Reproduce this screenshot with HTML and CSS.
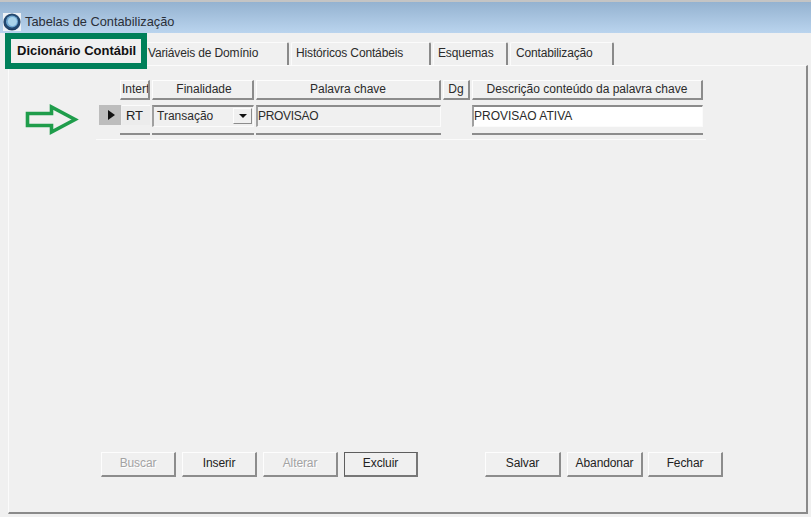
FILE: index.html
```html
<!DOCTYPE html>
<html lang="pt-BR">
<head>
<meta charset="utf-8">
<title>Tabelas de Contabilização</title>
<link rel="stylesheet" href="styles.css">
</head>
<body>
<div class="window">
  <header class="titlebar">
    <svg class="logo" width="18" height="18" viewBox="0 0 18 18" aria-hidden="true">
      <rect width="18" height="18" fill="#eef2f6"/>
      <circle cx="9" cy="9" r="8.6" fill="#23486f"/>
      <circle cx="9" cy="8.6" r="6" fill="#6fa8d2"/>
      <circle cx="9.4" cy="8.6" r="4.6" fill="#a9d3ea"/>
      <path d="M1 10.5 A8.4 8.4 0 0 0 17 11.5 A8 5.5 0 0 1 1 10.5Z" fill="#0f2747"/>
    </svg>
    <span class="title">Tabelas de Contabilização</span>
  </header>
  <nav class="tabs">
    <div class="tab tab-active">Dicionário Contábil<span class="highlight"></span></div>
    <div class="tab tab-var">Variáveis de Domínio</div>
    <div class="tab tab-hist">Históricos Contábeis</div>
    <div class="tab tab-esq">Esquemas</div>
    <div class="tab tab-cont">Contabilização</div>
  </nav>
  <main class="panel">
    <svg class="arrow" width="58" height="34" viewBox="0 0 58 34" aria-hidden="true">
      <path d="M3.5 9.5 H27.5 V3 L51 15.5 L27.5 28 V21.5 H3.5 Z" fill="none" stroke="#1f9d4b" stroke-width="3.6"/>
    </svg>
    <section class="grid-wrap">
      <div class="grid">
        <div class="head-spacer"></div>
        <div class="head head-clip">Interf</div>
        <div class="head head-fin">Finalidade</div>
        <div class="head">Palavra chave</div>
        <div class="head">Dg</div>
        <div class="head">Descrição conteúdo da palavra chave</div>

        <div class="indicator"><span class="pointer"></span></div>
        <div class="cell-plain">RT</div>
        <div class="field combo"><span>Transação</span><span class="combo-btn"><span class="combo-caret"></span></span></div>
        <div class="field field-tight">PROVISAO</div>
        <div></div>
        <div class="field field-white">PROVISAO ATIVA</div>

        <div></div>
        <div class="stub"></div>
        <div class="stub"></div>
        <div class="stub"></div>
        <div></div>
        <div class="stub"></div>
      </div>
    </section>
    <footer class="actions">
      <button class="btn w75" disabled>Buscar</button>
      <button class="btn w75">Inserir</button>
      <button class="btn w75" disabled>Alterar</button>
      <button class="btn btn-default w74">Excluir</button>
      <button class="btn w76 group-start">Salvar</button>
      <button class="btn w76">Abandonar</button>
      <button class="btn w75 tight">Fechar</button>
    </footer>
  </main>
</div>
</body>
</html>
```
FILE: styles.css
```css
* { box-sizing: border-box; }
html, body { margin: 0; padding: 0; }
body {
  width: 811px;
  height: 517px;
  overflow: hidden;
  background: #f0f0f0;
  font-family: "Liberation Sans", Arial, sans-serif;
  font-size: 12px;
  color: #222;
}
.window {
  width: 811px;
  height: 517px;
  display: flex;
  flex-direction: column;
}
.titlebar {
  height: 33px;
  flex: none;
  display: flex;
  align-items: center;
  gap: 4px;
  padding: 8px 0 0 3px;
  border-top: 2px solid #c4c4c4;
  background: linear-gradient(#94b2d0, #bad4ee);
}
.logo { flex: none; }
.title { font-size: 12.8px; color: #2a2f38; }
.tabs {
  height: 32px;
  flex: none;
  display: flex;
  align-items: flex-end;
  padding-left: 11px;
  gap: 2px;
}
.tab {
  height: 23px;
  padding: 3px 0 0;
  border-top: 1px solid #fbfbfb;
  border-left: 1px solid #fbfbfb;
  border-right: 2px solid #8a8a8a;
  border-radius: 2px 2px 0 0;
  color: #2b2b2b;
  letter-spacing: -0.15px;
  white-space: nowrap;
}
.tab-active {
  position: relative;
  width: 133px;
  height: 27px;
  padding: 5px 0 0 6px;
  border: none;
  font-size: 13px;
  font-weight: 700;
  letter-spacing: 0;
  color: #111;
}
.highlight {
  position: absolute;
  z-index: 2;
  left: -6px;
  top: -5px;
  width: 142px;
  height: 36px;
  border: 6px solid #00805a;
  pointer-events: none;
}
.tab-var { width: 143px; padding-left: 1px; }
.tab-hist { width: 140px; padding-left: 4px; }
.tab-esq { width: 75px; padding-left: 4px; }
.tab-cont { width: 104px; padding-left: 5px; }
.panel {
  position: relative;
  flex: 1;
  display: flex;
  flex-direction: column;
  margin: 0 3px 3px 8px;
  padding-top: 14px;
  border-top: 1px solid #fbfbfb;
  border-left: 1px solid #fbfbfb;
  border-right: 2px solid #8a8a8a;
  border-bottom: 2px solid #8a8a8a;
}
.arrow {
  position: absolute;
  left: 15px;
  top: 38px;
}
.grid-wrap {
  width: 610px;
  margin-left: 87px;
  padding: 0 3px 4px;
  border-bottom: 1px solid #fbfbfb;
}
.grid {
  display: grid;
  grid-template-columns: 19px 30px 102px 185px 27px 231px;
  grid-template-rows: 20px 22px 3px;
  column-gap: 2px;
  row-gap: 5px;
}
.head {
  display: flex;
  align-items: center;
  justify-content: center;
  overflow: hidden;
  white-space: nowrap;
  padding-bottom: 1px;
  border-top: 1px solid #fdfdfd;
  border-left: 1px solid #fdfdfd;
  border-right: 2px solid #8c8c8c;
  border-bottom: 2px solid #8c8c8c;
  color: #2b2b2b;
}
.head-clip { justify-content: flex-start; padding-left: 1px; }
.head-fin { padding-left: 3px; }
.indicator {
  margin-right: -3px;
  height: 20px;
  display: flex;
  align-items: center;
  padding-left: 9px;
  background: #bdbdbd;
}
.pointer {
  width: 0;
  height: 0;
  border-left: 7px solid #111;
  border-top: 5px solid transparent;
  border-bottom: 5px solid transparent;
}
.cell-plain {
  position: relative;
  margin-left: 2px;
  height: 20px;
  display: flex;
  align-items: center;
  justify-content: center;
  padding-right: 3px;
  font-size: 13px;
  background: #ececec;
  border-top: 1px solid #fbfbfb;
}
.field {
  display: flex;
  align-items: center;
  padding: 0 0 2px;
  white-space: nowrap;
  border-top: 2px solid #8c8c8c;
  border-left: 2px solid #a0a0a0;
  border-right: 1px solid #fbfbfb;
  border-bottom: 1px solid #fbfbfb;
  color: #2b2b2b;
}
.field-tight { letter-spacing: -0.3px; }
.field-white { background: #fff; }
.combo { justify-content: space-between; padding: 0 1px 2px 3px; }
.combo-btn {
  width: 19px;
  height: 16px;
  display: flex;
  align-items: center;
  justify-content: center;
  border-top: 1px solid #fdfdfd;
  border-left: 1px solid #fdfdfd;
  border-right: 1px solid #8c8c8c;
  border-bottom: 1px solid #8c8c8c;
}
.combo-caret {
  width: 0;
  height: 0;
  border-top: 4px solid #111;
  border-left: 4px solid transparent;
  border-right: 4px solid transparent;
}
.stub { height: 2px; margin-top: 1px; background: #8c8c8c; }
.actions {
  margin-top: auto;
  margin-bottom: 35px;
  padding-left: 92px;
  display: flex;
  gap: 6px;
}
.btn {
  height: 25px;
  padding: 0 0 2px;
  font: inherit;
  letter-spacing: -0.1px;
  color: #222;
  background: #f0f0f0;
  border-top: 1px solid #fdfdfd;
  border-left: 1px solid #fdfdfd;
  border-right: 2px solid #8c8c8c;
  border-bottom: 2px solid #8c8c8c;
  border-radius: 0;
}
.btn:disabled { color: #a3a3a3; text-shadow: 1px 1px 0 #fff; }
.btn-default {
  border-top: 1px solid #5e5e5e;
  border-left: 1px solid #5e5e5e;
  border-right: 2px solid #777;
  border-bottom: 2px solid #777;
}
.w74 { width: 74px; }
.w75 { width: 75px; }
.w76 { width: 76px; }
.group-start { margin-left: 61px; }
.tight { margin-left: -1px; }
```
